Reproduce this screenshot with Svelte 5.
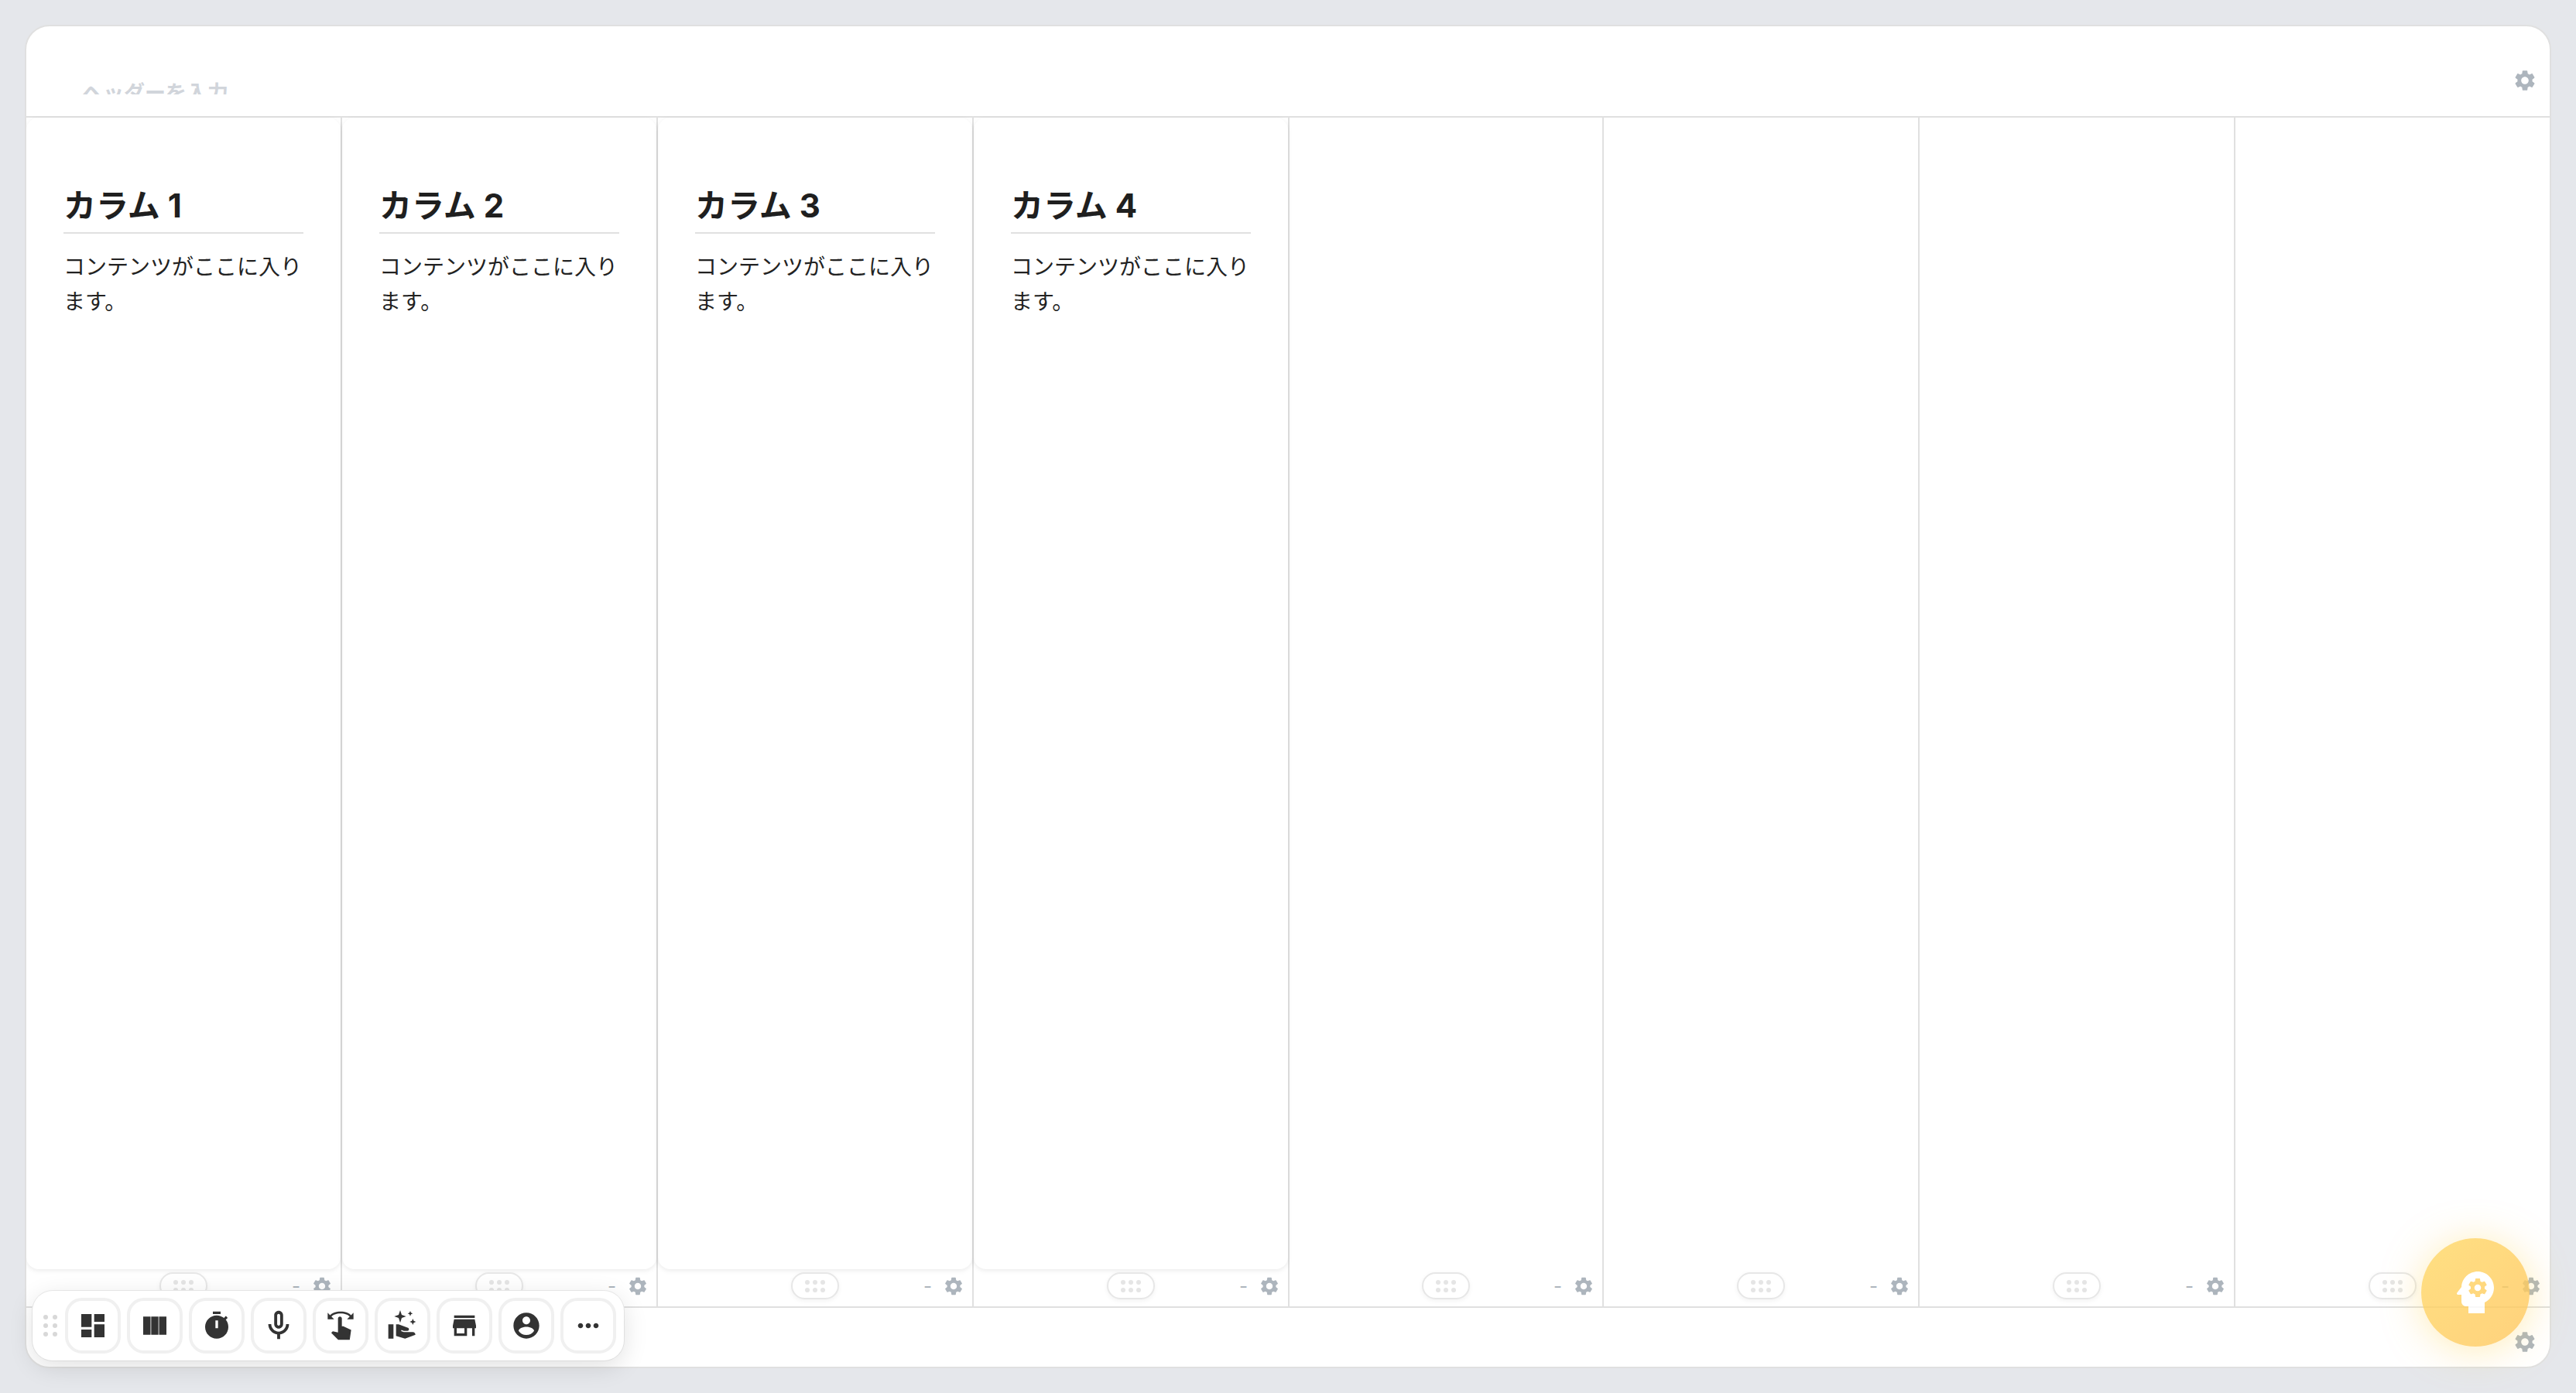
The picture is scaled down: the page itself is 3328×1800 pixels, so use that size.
<script>
  const gear =
    'M19.14 12.94c.04-.3.06-.61.06-.94 0-.32-.02-.64-.07-.94l2.03-1.58c.18-.14.23-.41.12-.61l-1.92-3.32c-.12-.22-.37-.29-.59-.22l-2.39.96c-.5-.38-1.03-.7-1.62-.94l-.36-2.54c-.04-.24-.24-.41-.48-.41h-3.84c-.24 0-.43.17-.47.41l-.36 2.54c-.59.24-1.13.57-1.62.94l-2.39-.96c-.22-.08-.47 0-.59.22L2.74 8.87c-.12.21-.08.47.12.61l2.03 1.58c-.05.3-.09.63-.09.94s.02.64.07.94l-2.03 1.58c-.18.14-.23.41-.12.61l1.92 3.32c.12.22.37.29.59.22l2.39-.96c.5.38 1.03.7 1.62.94l.36 2.54c.05.24.24.41.48.41h3.84c.24 0 .44-.17.47-.41l.36-2.54c.59-.24 1.13-.56 1.62-.94l2.39.96c.22.08.47 0 .59-.22l1.92-3.32c.12-.22.07-.47-.12-.61l-2.01-1.58zM12 15.6c-1.98 0-3.6-1.62-3.6-3.6s1.62-3.6 3.6-3.6 3.6 1.62 3.6 3.6-1.62 3.6-3.6 3.6z';

  const psychology =
    'M13 8.57c-.79 0-1.43.64-1.43 1.43s.64 1.43 1.43 1.43 1.43-.64 1.43-1.43-.64-1.43-1.43-1.43zM13 3C9.25 3 6.2 5.94 6.02 9.64L4.1 12.2c-.25.33 0 .8.4.8H6v3c0 1.1.9 2 2 2h1v3h7v-4.68c2.36-1.12 4-3.53 4-6.32 0-3.87-3.13-7-7-7zm3 7c0 .13-.01.26-.02.39l.83.66c.08.06.1.16.05.25l-.8 1.39c-.05.09-.16.12-.24.09l-.99-.4c-.21.16-.43.29-.67.39L14 13.83c-.01.1-.1.17-.2.17h-1.6c-.1 0-.18-.07-.2-.17l-.15-1.06c-.25-.1-.47-.23-.68-.39l-.99.4c-.09.03-.2 0-.25-.09l-.8-1.39c-.05-.08-.03-.19.05-.25l.84-.66c-.01-.13-.02-.26-.02-.39s.02-.27.04-.39l-.85-.66c-.08-.06-.1-.16-.05-.26l.8-1.38c.05-.09.15-.12.24-.09l1 .4c.2-.15.43-.29.67-.39L12 6.17c.02-.1.1-.17.2-.17h1.6c.1 0 .18.07.2.17l.15 1.06c.24.1.46.23.67.39l1-.4c.09-.03.2 0 .24.09l.8 1.38c.05.09.03.2-.05.26l-.85.66c.03.12.04.25.04.39z';

  const tools = [
    { name: 'layout', size: 40, d: 'M3 13h8V3H3v10zm0 8h8v-6H3v6zm10 0h8V11h-8v10zm0-18v6h8V3h-8z' },
    { name: 'columns', size: 40, d: 'M3 5h5.7v14H3zM9.2 5h5.6v14H9.2zM15.3 5H21v14h-5.7z' },
    {
      name: 'timer',
      size: 40,
      d: 'M15 1H9v2h6V1zm-4 13h2V8h-2v6zm8.03-6.61l1.42-1.42c-.43-.51-.9-.99-1.41-1.41l-1.42 1.42C16.07 4.74 14.12 4 12 4c-4.97 0-9 4.03-9 9s4.02 9 9 9 9-4.03 9-9c0-2.12-.74-4.07-1.97-5.61z'
    },
    {
      name: 'voice',
      size: 46,
      d: 'M12 14c1.66 0 3-1.34 3-3V5c0-1.66-1.34-3-3-3S9 3.34 9 5v6c0 1.66 1.34 3 3 3zm-1-9c0-.55.45-1 1-1s1 .45 1 1v6c0 .55-.45 1-1 1s-1-.45-1-1V5zm6 6c0 2.76-2.24 5-5 5s-5-2.24-5-5H5c0 3.53 2.61 6.43 6 6.92V21h2v-3.08c3.39-.49 6-3.39 6-6.92h-2z'
    },
    {
      name: 'swipe',
      size: 40,
      d: 'M20.13 3.87C18.69 2.17 15.6 1 12 1S5.31 2.17 3.87 3.87L2 2v5h5L4.93 4.93c1-1.29 3.7-2.43 7.07-2.43s6.07 1.14 7.07 2.43L17 7h5V2l-1.87 1.87zM13 12.5v-6c0-.83-.67-1.5-1.5-1.5S10 5.67 10 6.5v10.74l-4.04-.85-1.21 1.23L10.13 23h8.97l1.09-7.64-6.11-2.86z'
    },
    {
      name: 'sparkle',
      size: 40,
      d: 'M1 11h4v11H1zM20 17h-7l-2.09-.73.33-.94L13 16h2.82c.65 0 1.18-.53 1.18-1.18 0-.49-.31-.93-.77-1.11L8.97 11H7v9.02L14 22l8.01-3c-.01-1.1-.9-2-2.01-2zM10.2 0l1.2 3.6 3.4 1.2-3.4 1.2-1.2 3.8L9 6 5.6 4.8 9 3.6zM18 .6l.6 1.4 1.4.6-1.4.6-.6 1.4-.6-1.4-1.4-.6 1.4-.6zM20 6.6l.7 1.7 1.7.7-1.7.7-.7 1.7-.7-1.7-1.7-.7 1.7-.7z'
    },
    { name: 'store', size: 40, d: 'M20 4H4v2h16V4zm1 10v-2l-1-5H4l-1 5v2h1v6h10v-6h4v6h2v-6h1zm-9 4H6v-4h6v4z' },
    {
      name: 'account',
      size: 40,
      d: 'M12 2C6.48 2 2 6.48 2 12s4.48 10 10 10 10-4.48 10-10S17.52 2 12 2zm0 3c1.66 0 3 1.34 3 3s-1.34 3-3 3-3-1.34-3-3 1.34-3 3-3zm0 14.2c-2.5 0-4.71-1.28-6-3.22.03-1.99 4-3.08 6-3.08 1.99 0 5.97 1.09 6 3.08-1.29 1.94-3.5 3.22-6 3.22z'
    },
    {
      name: 'more',
      size: 40,
      d: 'M6 10c-1.1 0-2 .9-2 2s.9 2 2 2 2-.9 2-2-.9-2-2-2zm12 0c-1.1 0-2 .9-2 2s.9 2 2 2 2-.9 2-2-.9-2-2-2zm-6 0c-1.1 0-2 .9-2 2s.9 2 2 2 2-.9 2-2-.9-2-2-2z'
    }
  ];

  const columns = [
    { title: 'カラム 1', body: 'コンテンツがここに入ります。' },
    { title: 'カラム 2', body: 'コンテンツがここに入ります。' },
    { title: 'カラム 3', body: 'コンテンツがここに入ります。' },
    { title: 'カラム 4', body: 'コンテンツがここに入ります。' },
    {},
    {},
    {},
    {}
  ];
</script>

<div class="page">
  <div class="sheet">
    <header class="sheet-head">
      <div class="head-input">ヘッダーを入力</div>
      <svg class="gear" viewBox="0 0 24 24"><path d={gear} /></svg>
    </header>

    <div class="columns">
      {#each columns as col}
        <section class="column">
          <div class="col-body" class:filled={col.title}>
            {#if col.title}
              <h2>{col.title}</h2>
              <p>{col.body}</p>
            {/if}
          </div>
          <div class="col-foot">
            <div class="pill">
              {#each Array(6) as _}
                <span></span>
              {/each}
            </div>
            <div class="col-actions">
              <span class="dash">-</span>
              <svg class="gear small" viewBox="0 0 24 24"><path d={gear} /></svg>
            </div>
          </div>
        </section>
      {/each}
    </div>

    <footer class="sheet-foot">
      <svg class="gear" viewBox="0 0 24 24"><path d={gear} /></svg>
    </footer>
  </div>

  <nav class="toolbar">
    <div class="grip">
      {#each Array(6) as _}
        <span></span>
      {/each}
    </div>
    {#each tools as tool}
      <button type="button" aria-label={tool.name}>
        <svg style={`width:${tool.size}px;height:${tool.size}px`} viewBox="0 0 24 24"><path fill-rule="evenodd" d={tool.d} /></svg>
      </button>
    {/each}
  </nav>

  <div class="assist">
    <svg viewBox="0 0 24 24"><path d={psychology} /></svg>
  </div>
</div>

<style>
  :global(body) {
    margin: 0;
    background: #e5e7eb;
    font-family: Inter, 'Noto Sans CJK JP', sans-serif;
  }

  .page {
    position: relative;
    box-sizing: border-box;
    width: 3328px;
    height: 1800px;
    padding: 32px;
  }

  .sheet {
    display: flex;
    flex-direction: column;
    box-sizing: border-box;
    height: 100%;
    overflow: hidden;
    border: 2px solid #e0e0e0;
    border-radius: 32px;
    background: #fff;
  }

  .sheet-head {
    display: flex;
    align-items: flex-start;
    flex: none;
    box-sizing: border-box;
    height: 118px;
    padding: 54px 16px 0 72px;
    border-bottom: 2px solid #e0e0e0;
  }

  .head-input {
    flex: 1;
    height: 18px;
    margin-top: 16px;
    overflow: hidden;
    font-size: 27px;
    font-weight: 700;
    line-height: 34px;
    color: #d1d5db;
  }

  .gear {
    display: block;
    flex: none;
    width: 32px;
    height: 32px;
    fill: #adb5bd;
  }

  .gear.small {
    width: 28px;
    height: 28px;
  }

  .columns {
    display: grid;
    flex: 1;
    grid-template-columns: repeat(4, 408px) 406px 408px 408px 406px;
    min-height: 0;
  }

  .column {
    display: flex;
    flex-direction: column;
    box-sizing: border-box;
    min-width: 0;
    border-right: 2px solid #e0e0e0;
  }

  .column:last-child {
    border-right: 0;
  }

  .col-body {
    flex: 1;
    box-sizing: border-box;
    padding: 84px 48px 0;
    border-radius: 0 0 16px 16px;
  }

  .col-body.filled {
    border-radius: 16px;
    box-shadow: 0 2px 6px rgba(0, 0, 0, 0.08);
  }

  h2 {
    margin: 0;
    padding-bottom: 4px;
    border-bottom: 2px solid #e0e0e0;
    font-size: 42px;
    font-weight: 700;
    line-height: 60px;
    color: #1f1f1f;
  }

  p {
    margin: 21px 0 0;
    font-size: 28px;
    line-height: 44.8px;
    color: #222;
  }

  .col-foot {
    display: grid;
    flex: none;
    grid-template-columns: 1fr auto 1fr;
    box-sizing: border-box;
    height: 48px;
    padding: 4px 10px 0;
  }

  .pill {
    grid-column: 2;
    display: grid;
    grid-template-columns: repeat(3, 6px);
    align-content: center;
    justify-content: center;
    gap: 4px;
    box-sizing: border-box;
    width: 62px;
    height: 35px;
    border: 2px solid #e7e7e7;
    border-radius: 18px;
    background: #fff;
    box-shadow: 0 2px 6px rgba(0, 0, 0, 0.05);
  }

  .pill span {
    width: 6px;
    height: 6px;
    border-radius: 50%;
    background: #e5e5e5;
  }

  .col-actions {
    grid-column: 3;
    display: flex;
    align-items: flex-start;
    justify-content: flex-end;
    gap: 14px;
    padding-top: 4px;
  }

  .dash {
    font-size: 24px;
    line-height: 28px;
    color: #adb5bd;
  }

  .sheet-foot {
    display: flex;
    flex: none;
    justify-content: flex-end;
    box-sizing: border-box;
    height: 78px;
    padding: 28px 16px 0;
    border-top: 2px solid #e0e0e0;
  }

  .toolbar {
    position: absolute;
    left: 42px;
    top: 1668px;
    display: flex;
    align-items: center;
    gap: 8px;
    box-sizing: border-box;
    width: 764px;
    height: 90px;
    padding: 0 10px 0 14px;
    border-radius: 26px;
    background: #fff;
    box-shadow: 0 8px 32px rgba(0, 0, 0, 0.12), 0 0 0 1px #eee;
  }

  .grip {
    display: grid;
    grid-template-columns: repeat(2, 6px);
    gap: 5px 6px;
    width: 18px;
    margin-right: 2px;
  }

  .grip span {
    width: 6px;
    height: 6px;
    border-radius: 50%;
    background: #d8d8d8;
  }

  button {
    display: flex;
    align-items: center;
    justify-content: center;
    flex: none;
    box-sizing: border-box;
    width: 72px;
    height: 72px;
    padding: 0;
    border: 4px solid #f0f0f0;
    border-radius: 22px;
    background: #fff;
  }

  button svg {
    display: block;
    fill: #333;
  }

  .assist {
    position: absolute;
    left: 3128px;
    top: 1600px;
    display: flex;
    align-items: center;
    justify-content: center;
    width: 140px;
    height: 140px;
    border-radius: 50%;
    background: linear-gradient(135deg, #ffd863, #ffc75c);
    opacity: 0.8;
    box-shadow: 0 4px 48px rgba(255, 213, 79, 0.5);
  }

  .assist svg {
    width: 72px;
    height: 72px;
    fill: #fff;
  }
</style>
